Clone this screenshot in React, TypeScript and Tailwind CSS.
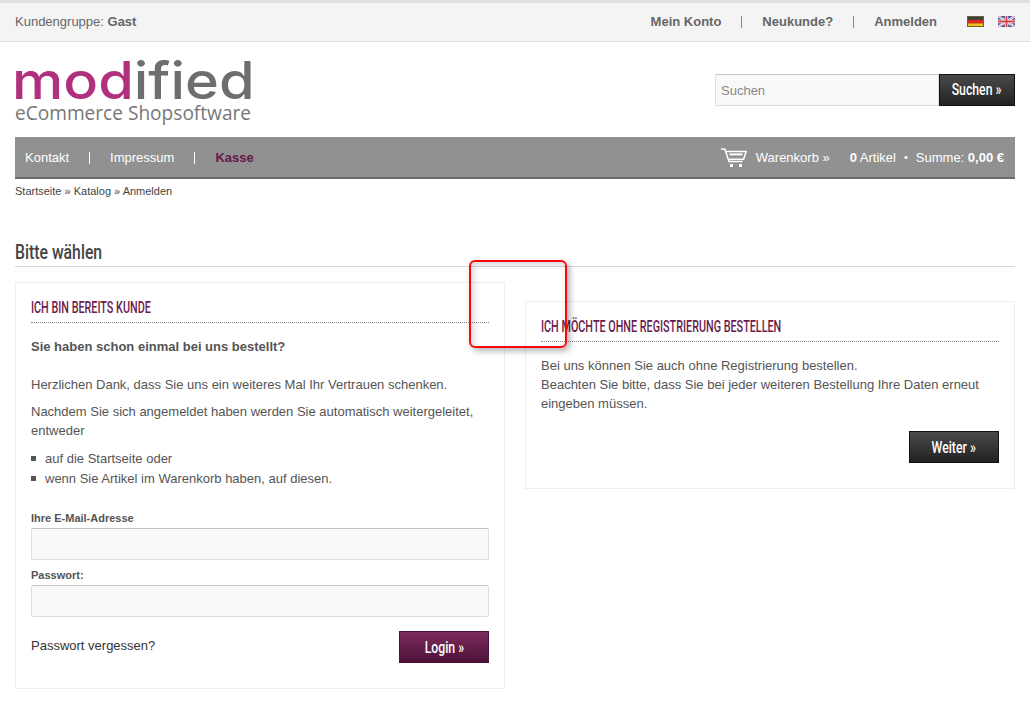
const arial = "font-['Liberation_Sans',Arial,sans-serif]";
const cond = "font-['Roboto',sans-serif]";

function CartIcon() {
  return (
    <svg width="26" height="20" viewBox="0 0 26 20" fill="none" stroke="#fff" strokeWidth="1.5">
      <path d="M0 1h3.8l4.2 12.6h13.5" />
      <path d="M4.8 3.6h20.4l-2.6 7.6H7.6" />
      <path d="M8.5 6.4h13" strokeWidth="2" />
      <rect x="9" y="16" width="3" height="3" fill="#fff" stroke="none" />
      <rect x="18" y="16" width="3" height="3" fill="#fff" stroke="none" />
    </svg>
  );
}

function FlagDe() {
  return (
    <svg width="17" height="11" viewBox="0 0 17 11" className="block">
      <rect width="17" height="11" fill="#6b6238" />
      <rect x="1" y="1" width="15" height="3" fill="#3f3f3f" />
      <rect x="1" y="4" width="15" height="3.5" fill="#dd2a1f" />
      <rect x="1" y="7.5" width="15" height="2.5" fill="#f0bf20" />
    </svg>
  );
}

function FlagEn() {
  return (
    <svg width="17" height="11" viewBox="0 0 17 11" className="block">
      <rect width="17" height="11" fill="#3d4f9e" />
      <path d="M0 0L17 11M17 0L0 11" stroke="#f0f0f0" strokeWidth="2.4" />
      <path d="M0 0L17 11M17 0L0 11" stroke="#d9828f" strokeWidth="0.8" />
      <path d="M8.5 0V11M0 5.5H17" stroke="#f4f4f4" strokeWidth="3.4" />
      <path d="M8.5 0V11M0 5.5H17" stroke="#d8404f" strokeWidth="1.8" />
    </svg>
  );
}

function Btn({ label, w, purple }: { label: string; w: string; purple?: boolean }) {
  return (
    <button
      className={`${w} h-8 flex items-center justify-center border text-white ${
        purple
          ? "border-[#4a1238] bg-gradient-to-b from-[#7c2b5c] to-[#4d1239]"
          : "border-[#111] bg-gradient-to-b from-[#4a4a4a] to-[#222]"
      } ${cond} font-medium text-[17px]`}
    >
      <span className="inline-block scale-x-[0.72] whitespace-nowrap">{label} »</span>
    </button>
  );
}

function BoxTitle({ children }: { children: string }) {
  return (
    <h2 className="pb-[4px] border-b border-dotted border-[#888] whitespace-nowrap">
      <span className={`inline-block origin-left scale-x-[0.635] ${cond} font-medium text-[17px] leading-[20px] text-[#6a1b4d]`}>
        {children}
      </span>
    </h2>
  );
}

function Field({ label }: { label: string }) {
  return (
    <div>
      <label className="block text-[11px] leading-[13px] font-bold text-[#555]">{label}</label>
      <input className="mt-[3px] block w-full h-8 rounded-[2px] bg-[#f9f9f9] border border-[#dedede] border-t-[#c4c4c4] outline-none" />
    </div>
  );
}

export default function App() {
  return (
    <div className={`relative w-[1030px] min-h-[709px] bg-white overflow-hidden text-[#555] ${arial}`}>
      <div className="h-[42px] border-t-[3px] border-b border-t-[#e0e0e0] border-b-[#dedede] bg-[#f4f4f4] px-[15px] flex items-center justify-between text-[13px]">
        <div className="text-[#666]">
          Kundengruppe: <b className="text-[#666]">Gast</b>
        </div>
        <div className="flex items-center font-bold text-[#666]">
          <span>Mein Konto</span>
          <span className="mx-5 h-3 w-px bg-[#888]" />
          <span>Neukunde?</span>
          <span className="mx-5 h-3 w-px bg-[#888]" />
          <span>Anmelden</span>
          <span className="ml-[30px] mr-[14px] mb-[2px]">
            <FlagDe />
          </span>
          <span className="mb-[2px]">
            <FlagEn />
          </span>
        </div>
      </div>

      <div className="h-[95px] px-[15px] flex justify-between">
        <div className="w-[240px] pt-[19px]">
          <div className="-ml-[3px] font-['Inter',sans-serif] font-medium text-[52px] leading-[40px] origin-left scale-x-[1.11] whitespace-nowrap">
            <span className="text-[#b0307f]">mod</span>
            <span className="text-[#6e6e6e]">ified</span>
          </div>
          <div className="mt-[4px] font-['Open_Sans',sans-serif] text-[19.1px] leading-[16px] text-[#777] whitespace-nowrap">
            eCommerce Shopsoftware
          </div>
        </div>
        <div className="pt-[32px] flex items-start">
          <input
            placeholder="Suchen"
            className="w-[224px] h-8 px-[5px] rounded-l-[2px] bg-[#f9f9f9] border border-[#dedede] border-t-[#c4c4c4] text-[13px] outline-none placeholder:text-[#888]"
          />
          <Btn label="Suchen" w="w-[76px]" />
        </div>
      </div>

      <div className="mx-[15px] h-[42px] pt-px bg-[#919191] border-b-2 border-[#6d6d6d] flex items-center justify-between pl-[10px] pr-[11px] text-[13px] text-white">
        <div className="flex items-center">
          <span>Kontakt</span>
          <span className="mx-5 h-3 w-px bg-white" />
          <span>Impressum</span>
          <span className="mx-5 h-3 w-px bg-white" />
          <b className="text-[#65174a]">Kasse</b>
        </div>
        <div className="flex items-center">
          <CartIcon />
          <span className="ml-[9px]">Warenkorb »</span>
          <span className="ml-5">
            <b>0</b> Artikel
          </span>
          <span className="mx-[8px] text-[11px]">•</span>
          <span>
            Summe: <b>0,00 €</b>
          </span>
        </div>
      </div>

      <div className="mx-[15px] mt-[5px] text-[11px] leading-[14px] text-[#444]">Startseite » Katalog » Anmelden</div>

      <h1 className="mx-[15px] mt-[40px] h-[29px] border-b border-[#d8d8d8] whitespace-nowrap">
        <span className={`inline-block origin-left scale-x-[0.77] ${cond} font-medium text-[20.5px] leading-[28px] text-[#444]`}>
          Bitte wählen
        </span>
      </h1>

      <div className="mx-[15px] flex gap-5 items-start text-[13px] leading-[19px]">
        <div className="mt-[15px] flex-1 h-[407px] border border-[#eee] px-[15px] pt-[14px]">
          <BoxTitle>ICH BIN BEREITS KUNDE</BoxTitle>
          <p className="mt-[14px] font-bold text-[#555]">Sie haben schon einmal bei uns bestellt?</p>
          <p className="mt-[19px]">Herzlichen Dank, dass Sie uns ein weiteres Mal Ihr Vertrauen schenken.</p>
          <p className="mt-[8px]">Nachdem Sie sich angemeldet haben werden Sie automatisch weitergeleitet, entweder</p>
          <ul className="mt-[9px]">
            <li className="flex items-center gap-[9px]">
              <span className="w-[5px] h-[5px] bg-[#555]" />
              auf die Startseite oder
            </li>
            <li className="mt-px flex items-center gap-[9px]">
              <span className="w-[5px] h-[5px] bg-[#555]" />
              wenn Sie Artikel im Warenkorb haben, auf diesen.
            </li>
          </ul>
          <div className="mt-[24px] flex flex-col gap-[9px]">
            <Field label="Ihre E-Mail-Adresse" />
            <Field label="Passwort:" />
          </div>
          <div className="mt-[14px] flex items-start justify-between">
            <span className="text-[#333] text-[13px] leading-[30px]">Passwort vergessen?</span>
            <Btn label="Login" w="w-[90px]" purple />
          </div>
        </div>

        <div className="mt-[34px] flex-1 h-[188px] border border-[#eee] px-[15px] pt-[14px]">
          <BoxTitle>ICH MÖCHTE OHNE REGISTRIERUNG BESTELLEN</BoxTitle>
          <p className="mt-[14px]">
            Bei uns können Sie auch ohne Registrierung bestellen.
            <br />
            Beachten Sie bitte, dass Sie bei jeder weiteren Bestellung Ihre Daten erneut eingeben müssen.
          </p>
          <div className="mt-[18px] flex justify-end">
            <Btn label="Weiter" w="w-[90px]" />
          </div>
        </div>
      </div>

      {/* rote Markierung liegt über dem Inhalt */}
      <div className="absolute left-[469px] top-[260px] w-[98px] h-[88px] rounded-[6px] border-2 border-[#f80808] shadow-[3px_3px_6px_rgba(0,0,0,0.3),inset_3px_3px_6px_rgba(0,0,0,0.15)]" />
    </div>
  );
}
